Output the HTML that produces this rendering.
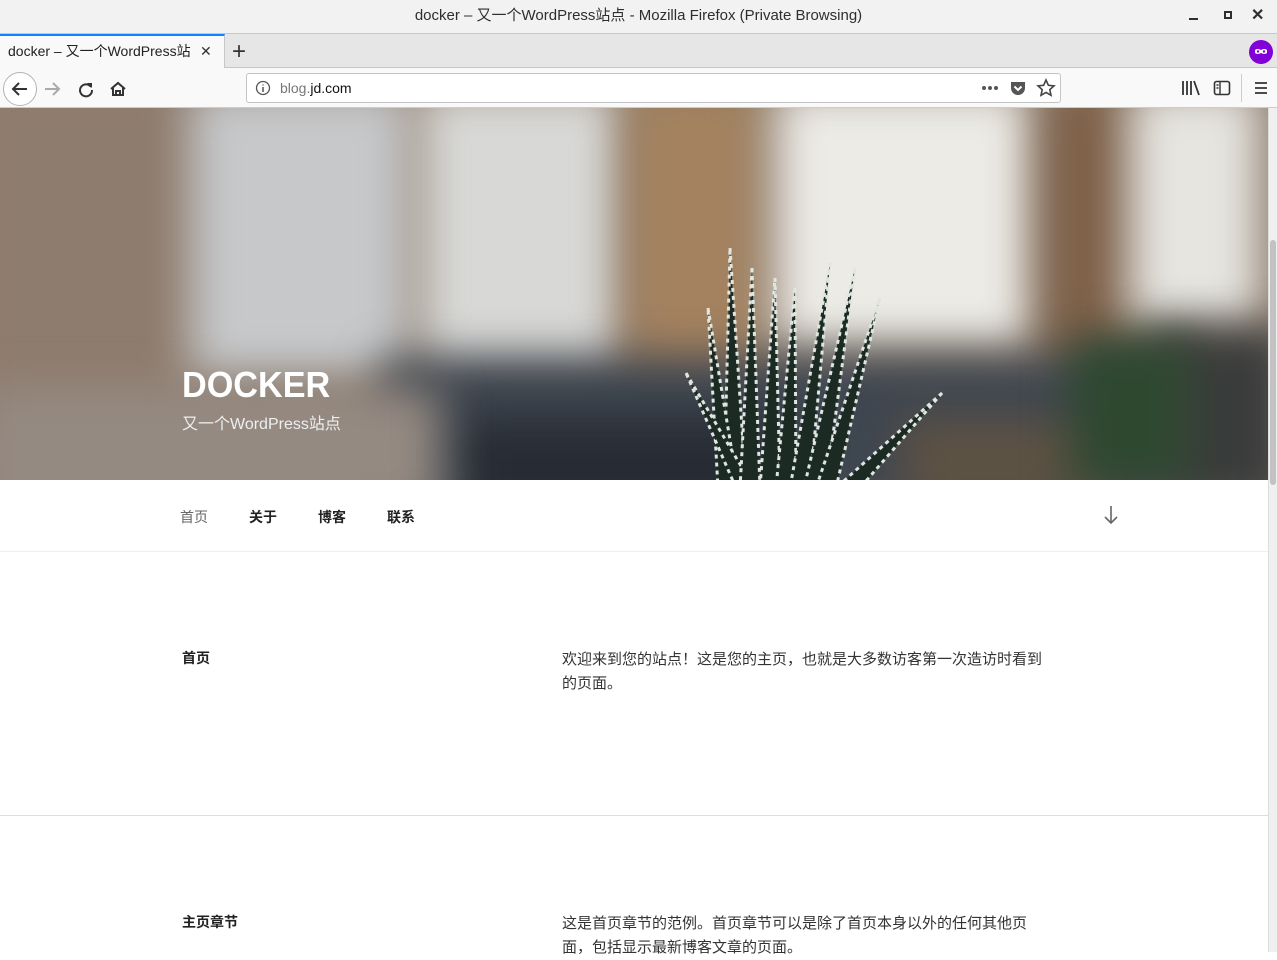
<!DOCTYPE html>
<html><head><meta charset="utf-8"><style>
*{margin:0;padding:0;box-sizing:border-box}
body{width:1277px;height:952px;overflow:hidden;background:#fff;font-family:"Liberation Sans","Noto Sans CJK SC",sans-serif;position:relative}
.abs{position:absolute}
#title{left:0;top:0;width:1277px;height:34px;background:#f2f2f2;border-bottom:1px solid #c8c8c8;text-align:center;line-height:32px;font-size:15px;color:#2e2e2e}
#tabs{left:0;top:34px;width:1277px;height:34px;background:#e6e6e6;border-bottom:1px solid #c6c6c6}
#tab{left:0;top:34px;width:225px;height:35px;background:#f9f9f9;border-top:2px solid #0a84ff;border-right:1px solid #c6c6c6;font-size:14px;line-height:31px;padding-left:8px;color:#222}
#nav{left:0;top:68px;width:1277px;height:40px;background:#f9f9f9;border-bottom:1px solid #ccc}
#url{left:246px;top:73px;width:815px;height:30px;background:#fff;border:1px solid #c4c4c4;border-radius:3px;font-size:14px;line-height:28px;padding-left:33px;color:#111}
#hero{left:0;top:108px;width:1268px;height:372px;overflow:hidden;background:#8a7868}
.b{position:absolute;filter:blur(22px)}
#scroll{left:1268px;top:108px;width:9px;height:844px;background:#f0f0f0;border-left:1px solid #ddd}
#thumb{left:1270px;top:240px;width:6px;height:245px;background:#c2c2c2;border-radius:3px}
.menu{top:507px;font-size:14px;font-weight:bold;color:#222}
.txt{font-size:15px;line-height:24px;color:#333}
</style></head><body>
<div id="title" class="abs">docker – 又一个WordPress站点 - Mozilla Firefox (Private Browsing)</div>
<div class="abs" style="left:1189px;top:18px;width:9px;height:2px;background:#2e2e2e"></div>
<div class="abs" style="left:1224px;top:11px;width:8px;height:8px;border:2px solid #2e2e2e"></div>
<div class="abs" style="left:1251px;top:5px;font-size:16px;color:#2e2e2e;font-weight:bold">✕</div>
<div id="tabs" class="abs"></div>
<div id="tab" class="abs">docker – 又一个WordPress站 <span style="position:absolute;left:200px;color:#333">✕</span></div>
<div class="abs" style="left:232px;top:38px;font-size:24px;color:#333">+</div>
<div class="abs" style="left:1249px;top:40px;width:24px;height:24px;border-radius:50%;background:#8000d7"><svg width="24" height="24"><path d="M6 10c2-1.5 4-1 6 0 2-1 4-1.5 6 0v3c-2 1.5-4 1-6 0-2 1-4 1.5-6 0z" fill="#fff"/><circle cx="9" cy="11.5" r="1.2" fill="#8000d7"/><circle cx="15" cy="11.5" r="1.2" fill="#8000d7"/></svg></div>
<div id="nav" class="abs"></div>
<div class="abs" style="left:3px;top:72px;width:34px;height:34px;border:1px solid #b4b4b4;border-radius:50%;background:#fff"><svg width="32" height="32"><path d="M9 16h14M15 10l-6 6 6 6" stroke="#333" stroke-width="2" fill="none"/></svg></div>
<svg class="abs" style="left:42px;top:78px" width="22" height="22"><path d="M3 11h14M11 5l6 6-6 6" stroke="#aaa" stroke-width="2" fill="none"/></svg>
<svg class="abs" style="left:75px;top:78px" width="22" height="22"><path d="M16 9A6 6 0 1 0 17 12" stroke="#333" stroke-width="2" fill="none"/><path d="M12 5h5v5z" fill="#333"/></svg>
<svg class="abs" style="left:107px;top:78px" width="22" height="22"><path d="M4 11l7-6 7 6M6 10v7h10v-7M9 17v-4h4v4" stroke="#333" stroke-width="2" fill="none"/></svg>
<div id="url" class="abs"><span style="color:#777">blog.</span>jd.com</div>
<svg class="abs" style="left:255px;top:80px" width="16" height="16"><circle cx="8" cy="8" r="6.5" stroke="#555" fill="none" stroke-width="1.3"/><path d="M8 7v5M8 4.5v1" stroke="#555" stroke-width="1.5"/></svg>
<svg class="abs" style="left:981px;top:85px" width="18" height="6"><circle cx="3" cy="3" r="2" fill="#555"/><circle cx="9" cy="3" r="2" fill="#555"/><circle cx="15" cy="3" r="2" fill="#555"/></svg>
<svg class="abs" style="left:1009px;top:79px" width="18" height="18"><path d="M2 3h14v6a7 7 0 0 1-14 0z" fill="#555"/><path d="M5.5 7.5l3.5 3.5 3.5-3.5" stroke="#fff" stroke-width="2" fill="none"/></svg>
<svg class="abs" style="left:1036px;top:78px" width="20" height="20"><path d="M10 2l2.4 5.3 5.6.6-4.2 3.8 1.2 5.6L10 14.4 5 17.3l1.2-5.6L2 7.9l5.6-.6z" stroke="#444" stroke-width="1.6" fill="none"/></svg>
<svg class="abs" style="left:1181px;top:79px" width="20" height="18"><path d="M2 2v14M6 2v14M10 2v14M13 2l5 14" stroke="#333" stroke-width="1.8"/></svg>
<svg class="abs" style="left:1213px;top:79px" width="18" height="18"><rect x="1.5" y="2.5" width="15" height="13" rx="2" stroke="#333" stroke-width="1.6" fill="none"/><path d="M7 3v12M3.5 6h2M3.5 9h2" stroke="#333" stroke-width="1.4"/></svg>
<div class="abs" style="left:1241px;top:74px;width:1px;height:28px;background:#ccc"></div>
<svg class="abs" style="left:1253px;top:80px" width="16" height="16"><path d="M2 3h12M2 8h12M2 13h12" stroke="#333" stroke-width="1.8"/></svg>

<div id="hero" class="abs">
 <div class="b" style="left:-40px;top:-40px;width:250px;height:460px;background:#8e7c6e"></div>
 <div class="b" style="left:190px;top:-20px;width:220px;height:290px;background:#c6c8ca"></div>
 <div class="b" style="left:420px;top:-20px;width:200px;height:290px;background:#d8d8d6"></div>
 <div class="b" style="left:630px;top:-20px;width:130px;height:300px;background:#a4825f"></div>
 <div class="b" style="left:775px;top:-20px;width:255px;height:260px;background:#ecebe6"></div>
 <div class="b" style="left:1050px;top:-20px;width:75px;height:290px;background:#7e6048"></div>
 <div class="b" style="left:1130px;top:-20px;width:130px;height:240px;background:#e6e5e0"></div>
 <div class="b" style="left:380px;top:250px;width:780px;height:160px;background:#3e4650"></div>
 <div class="b" style="left:460px;top:310px;width:320px;height:100px;background:#272c34"></div>
 <div class="b" style="left:1150px;top:220px;width:140px;height:180px;background:#3a3c3c"></div>
 <div class="b" style="left:-20px;top:280px;width:460px;height:130px;background:#958a82"></div>
 <div class="b" style="left:900px;top:310px;width:220px;height:90px;background:#5e5244"></div>
 <div class="b" style="left:1070px;top:230px;width:120px;height:150px;background:#2e4830"></div>
 <svg style="position:absolute;left:680px;top:140px" width="300" height="240">
  <g stroke-dasharray="4 4" stroke="#dfe6e0" stroke-width="3">
   <path d="M50 0 L66 240 L44 240Z" fill="#1c2a24"/>
   <path d="M28 60 L58 240 L38 240Z" fill="#1c2a24"/>
   <path d="M95 30 L100 240 L80 240Z" fill="#1c2a24"/>
   <path d="M115 40 L116 240 L96 240Z" fill="#1c2a24"/>
   <path d="M150 15 L130 240 L110 240Z" fill="#1c2a24"/>
   <path d="M175 20 L146 240 L124 240Z" fill="#1c2a24"/>
   <path d="M200 50 L156 240 L136 240Z" fill="#1c2a24"/>
   <path d="M6 125 L74 240 L56 240Z" fill="#1c2a24"/>
   <path d="M262 145 L180 240 L156 240Z" fill="#1c2a24"/>
   <path d="M72 20 L80 240 L60 240Z" fill="#1c2a24"/>
  </g>
 </svg>
 <div style="position:absolute;left:182px;top:256px;font-size:36px;font-weight:bold;color:#fff;transform:scaleX(0.95);transform-origin:left">DOCKER</div>
 <div style="position:absolute;left:182px;top:302px;font-size:16px;color:#eee">又一个WordPress站点</div>
</div>
<div id="scroll" class="abs"></div>
<div id="thumb" class="abs"></div>

<div class="abs menu" style="left:180px;color:#666;font-weight:normal">首页</div>
<div class="abs menu" style="left:249px">关于</div>
<div class="abs menu" style="left:318px">博客</div>
<div class="abs menu" style="left:387px">联系</div>
<svg class="abs" style="left:1102px;top:505px" width="18" height="20"><path d="M9 1v17M3 12l6 6 6-6" stroke="#666" stroke-width="1.6" fill="none"/></svg>
<div class="abs" style="left:0;top:551px;width:1268px;height:1px;background:#eee"></div>
<div class="abs" style="left:182px;top:648px;font-size:14px;font-weight:bold;color:#222">首页</div>
<div class="abs txt" style="left:562px;top:648px;width:485px">欢迎来到您的站点！这是您的主页，也就是大多数访客第一次造访时看到的页面。</div>
<div class="abs" style="left:0;top:815px;width:1268px;height:1px;background:#ddd"></div>
<div class="abs" style="left:182px;top:912px;font-size:14px;font-weight:bold;color:#222">主页章节</div>
<div class="abs txt" style="left:562px;top:912px;width:485px">这是首页章节的范例。首页章节可以是除了首页本身以外的任何其他页面，包括显示最新博客文章的页面。</div>
</body></html>
